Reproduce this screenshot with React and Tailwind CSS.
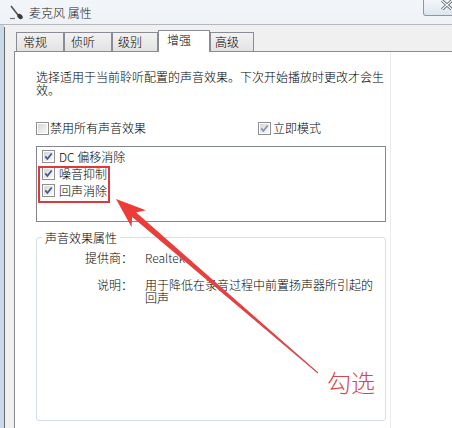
import React from "react";

const Check = ({ checked, dim }) => (
  <span className="flex w-[13px] h-[13px] shrink-0 border border-[#8e8f8f] bg-white p-px">
    <span className="flex flex-1 items-center justify-center bg-linear-to-br from-[#d6d6d6] to-[#fafafa]">
      {checked && (
        <svg width="9" height="9" viewBox="0 0 9 9">
          <path
            d="M1.3 4.4 L3.4 7 L7.7 1.4"
            fill="none"
            stroke={dim ? "#8592b5" : "#3f5590"}
            strokeWidth="1.7"
          />
        </svg>
      )}
    </span>
  </span>
);

const tabs = [
  { label: "常规", w: "w-[48px] pl-[6px]" },
  { label: "侦听", w: "w-[48px] pl-[6px]" },
  { label: "级别", w: "w-[46px] pl-[5px]" },
  { label: "增强", w: "w-[52px] pl-[8px]", active: true },
  { label: "高级", w: "w-[44px] pl-[4px]" },
];

const effects = ["DC 偏移消除", "噪音抑制", "回声消除"];

export default function App() {
  return (
    <div className="relative w-[452px] h-[428px] overflow-hidden bg-[#f0f0f0] text-[12px] font-light text-black font-['Noto_Sans_CJK_SC','Liberation_Sans',sans-serif]">

      {/* Title bar */}
      <div className="flex h-[25px] items-start border-b border-[#b4b8bc] bg-linear-to-b from-[#f3f6f9] to-[#eef2f6]">
        <svg className="ml-[9px] mt-[4px]" width="15" height="16" viewBox="0 0 15 16">
          <path d="M2 2 L9 11" stroke="#555" strokeWidth="1.6" />
          <ellipse cx="11" cy="12.5" rx="3" ry="2.2" fill="#3a3a3a" transform="rotate(40 11 12.5)" />
          <path d="M1 14.5 L6 14.5" stroke="#777" strokeWidth="1.2" />
        </svg>
        <span className="ml-[5px] mt-[5px] leading-[16px] text-[#1a1a1a]">麦克风 属性</span>
        <div className="ml-auto mr-[-6px] flex h-[16px] w-[35px] items-start justify-end rounded-b-[3px] border border-t-0 border-[#8a99a8] bg-linear-to-b from-[#f4f7fa] to-[#dde6ee] pr-[4px]">
          <svg width="12" height="10" viewBox="0 0 12 10">
            <path d="M1 0.5 L11 9.5 M11 0.5 L1 9.5" stroke="#5f6770" strokeWidth="3" />
            <path d="M1 0.5 L11 9.5 M11 0.5 L1 9.5" stroke="#ffffff" strokeWidth="1.2" />
          </svg>
        </div>
      </div>

      {/* Body */}
      <div className="flex h-[403px]">
        <div className="w-[4px] bg-[#c8d9e7]" />
        <div className="w-px bg-[#6a6a6a] mt-[2px]" />
        <div className="flex flex-1 flex-col pl-[9px]">

          {/* Tabs */}
          <div className="flex h-[26px] items-end pl-[2px]">
            {tabs.map((t) =>
              t.active ? (
                <div
                  key={t.label}
                  className={`relative z-10 mb-[-1px] flex h-[22px] items-center pb-[3px] border border-b-0 border-[#898c95] bg-white ${t.w}`}
                >
                  {t.label}
                </div>
              ) : (
                <div
                  key={t.label}
                  className={`flex h-[19px] items-center border border-b-0 border-[#898c95] bg-linear-to-b from-[#f2f2f2] to-[#e3e3e3] ${t.w}`}
                >
                  {t.label}
                </div>
              )
            )}
          </div>

          {/* Panel */}
          <div className="flex-1 border-t border-l border-[#898c95] bg-white">
            <div className="h-full w-[376px] border-r border-[#ececec] pl-[21px] pt-[18px]">

              <p className="w-[350px] leading-[13px]">
                选择适用于当前聆听配置的声音效果。下次开始播放时更改才会生效。
              </p>

              <div className="mt-[25px] flex h-[14px] items-center">
                <div className="flex w-[222px] items-center gap-[1px]">
                  <Check />
                  <span className="leading-[14px]">禁用所有声音效果</span>
                </div>
                <div className="flex items-center gap-[2px]">
                  <Check checked dim />
                  <span className="leading-[14px]">立即模式</span>
                </div>
              </div>

              {/* Effects list */}
              <div className="mt-[11px] h-[76px] w-[350px] border border-[#828790] pl-[5px] pt-[1px]">
                {effects.map((e) => (
                  <div key={e} className="flex h-[17px] items-center gap-[4px]">
                    <Check checked />
                    <span className="leading-[14px]">{e}</span>
                  </div>
                ))}
              </div>

              {/* Properties group */}
              <div className="relative mt-[15px] h-[184px] w-[350px] rounded-[3px] border border-[#d5dfe5]">
                <span className="absolute left-[5px] top-[-7px] bg-white px-[3px] leading-[13px]">
                  声音效果属性
                </span>
                <div className="flex pt-[13px] leading-[13px]">
                  <span className="w-[96px] text-right">提供商：</span>
                  <span className="ml-[12px] text-[12px] text-[#222]">Realtek</span>
                </div>
                <div className="mt-[14px] flex leading-[13px]">
                  <span className="w-[96px] text-right">说明：</span>
                  <span className="ml-[12px] w-[232px]">用于降低在录音过程中前置扬声器所引起的回声</span>
                </div>
              </div>

            </div>
          </div>
        </div>
      </div>

      {/* Annotation: red box, arrow, label */}
      <div className="absolute left-[38px] top-[166px] h-[37px] w-[72px] border-2 border-[#e0383a]" />

      <svg className="pointer-events-none absolute inset-0" width="452" height="428" viewBox="0 0 452 428">
        <defs>
          <linearGradient id="arr" x1="116" y1="199" x2="318" y2="373" gradientUnits="userSpaceOnUse">
            <stop offset="0" stopColor="#ee3b36" />
            <stop offset="1" stopColor="#d9464a" />
          </linearGradient>
        </defs>
        <polygon
          points="116,199 145.9,210.3 136.2,212.4 318.3,372.6 317.7,373.4 132.2,216.9 131.5,226.9"
          fill="url(#arr)"
        />
      </svg>

      <span className="absolute left-[327px] top-[368px] text-[24px] leading-[28px] text-[#d5484a]">
        勾选
      </span>
    </div>
  );
}
